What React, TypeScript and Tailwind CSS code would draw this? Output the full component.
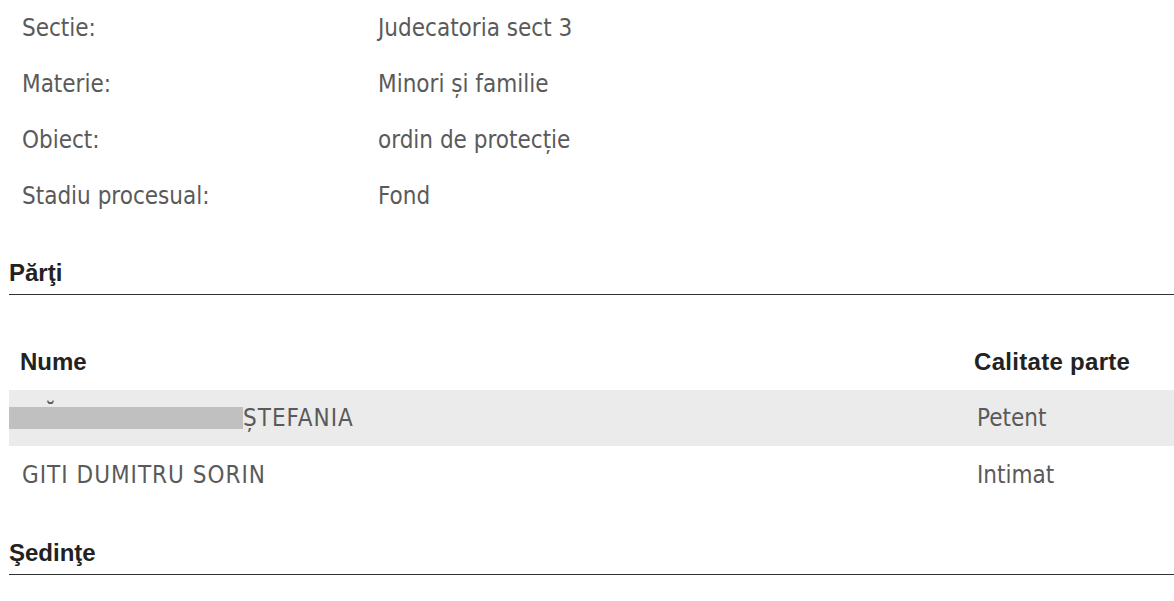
const info = [
  { label: "Sectie:", value: "Judecatoria sect 3" },
  { label: "Materie:", value: "Minori și familie" },
  { label: "Obiect:", value: "ordin de protecție" },
  { label: "Stadiu procesual:", value: "Fond" },
];

const SectionTitle: React.FC<{ title: string }> = ({ title }) => (
  <div className="border-b border-[#333] pb-[7px]">
    <h2 className="text-[24px] leading-[28px] font-bold text-[#222] font-['Liberation_Sans',Arial,sans-serif]">
      {title}
    </h2>
  </div>
);

export default function App() {
  return (
    <div className="w-[1174px] h-[601px] bg-white pl-[9px] overflow-hidden font-['DejaVu_Sans_Condensed','DejaVu_Sans',sans-serif] text-[#5a5a5a]">
      <div className="flex flex-col">
        {info.map(({ label, value }) => (
          <div key={label} className="flex items-center h-[56px] px-[13px] text-[24px]">
            <div className="w-[356px]">{label}</div>
            <div>{value}</div>
          </div>
        ))}
      </div>

      <div className="mt-[35px]">
        <SectionTitle title="Părţi" />
      </div>

      <div className="mt-[38px]">
        <div className="grid grid-cols-[1fr_209px] h-[57px] items-center font-['Liberation_Sans',Arial,sans-serif] font-bold text-[24px] text-[#222]">
          <div className="px-[11px]">Nume</div>
          <div className="px-[9px] tracking-[0.3px]">Calitate parte</div>
        </div>
        <div className="grid grid-cols-[1fr_209px] h-[56px] items-center bg-[#ebebeb] text-[24px]">
          <div className="relative flex items-center">
            <span className="absolute left-[36px] top-[0px] text-[24px] leading-none text-[#555]">˘</span>
            <span className="inline-block w-[234px] h-[22px] bg-[#c0c0c0]" />
            <span className="tracking-[1px]">ȘTEFANIA</span>
          </div>
          <div className="px-[12px]">Petent</div>
        </div>
        <div className="grid grid-cols-[1fr_209px] h-[57px] items-center text-[24px]">
          <div className="px-[13px] tracking-[1px]">GITI DUMITRU SORIN</div>
          <div className="px-[12px]">Intimat</div>
        </div>
      </div>

      <div className="mt-[36px]">
        <SectionTitle title="Şedinţe" />
      </div>
    </div>
  );
}
